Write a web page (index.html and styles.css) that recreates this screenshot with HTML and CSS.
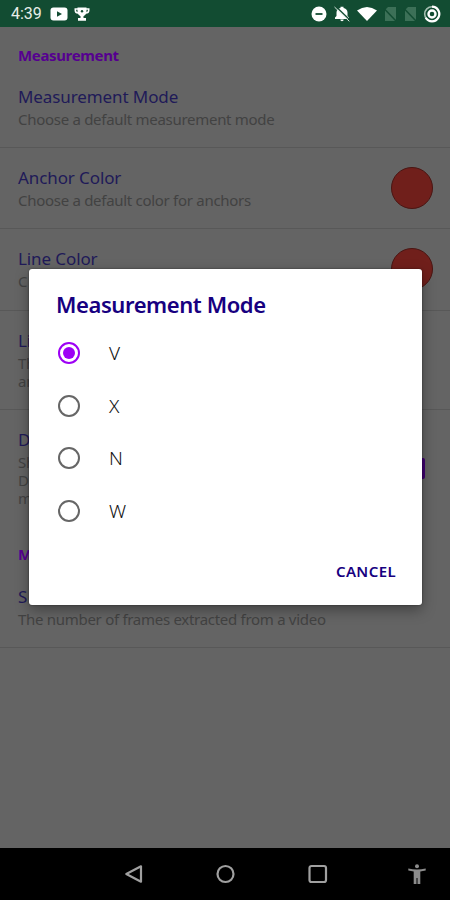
FILE: index.html
```html
<!DOCTYPE html>
<html lang="en">
<head>
  <meta charset="UTF-8">
  <title>Settings</title>
  <meta name="viewport" content="width=device-width, initial-scale=1.0">
  <link rel="stylesheet" href="styles.css">
</head>
<body>
  <div class="screen">
    <header class="status-bar">
      <span class="time">4:39</span>
      <svg class="youtube" width="18" height="14" viewBox="0 0 18 14">
        <rect x="0.5" y="0.5" width="17" height="13" rx="3" fill="#fff"/>
        <path d="M7 4.2v5.6L12 7z" fill="#124c32"/>
      </svg>
      <svg class="trophy" width="16" height="14" viewBox="0 0 16 14">
        <path d="M3.500.5h9v4.300a4.500 4.500 0 0 1-9 0z" fill="#fff"/>
        <path d="M4 2H1.300v1.300C1.300 5 2.500 6 4.300 6M12 2h2.700v1.300C14.700 5 13.500 6 11.700 6" fill="none" stroke="#fff" stroke-width="1.600"/>
        <path d="M6.500 8h3v3h2.500v2.700H4V11h2.500z" fill="#fff"/>
        <circle cx="8" cy="4.300" r="1.200" fill="#124c32"/>
      </svg>
      <div class="status-right">
        <svg width="16" height="16" viewBox="0 0 16 16">
          <circle cx="8" cy="8" r="7.500" fill="#fff"/>
          <path d="M4.500 8h7" stroke="#124c32" stroke-width="1.800"/>
        </svg>
        <svg width="18" height="16" viewBox="0 0 18 16">
          <path d="M2 13v-1.500L3.500 10V6.500C3.500 4 5.300 2.500 7.500 2V.8h3V2c2.200.5 4 2 4 4.500V10l1.500 1.500V13zM7.300 13.500h3.400a1.700 1.700 0 0 1-3.400 0z" fill="#fff"/>
          <path d="M2.600.2l14.600 14" stroke="#124c32" stroke-width="1.300"/>
          <path d="M1.500 1l14.800 14.300" stroke="#dce8e1" stroke-width="1"/>
        </svg>
        <svg width="20" height="16" viewBox="0 0 20 16">
          <path d="M0 4.500Q10-2.500 20 4.500L10 15z" fill="#fff"/>
        </svg>
        <svg width="14" height="16" viewBox="0 0 14 16">
          <path d="M5 1h8v14H2V4z" fill="#3c7057"/>
          <path d="M1 2.500l12 12.500" stroke="#124c32" stroke-width="1.500"/>
        </svg>
        <svg width="14" height="16" viewBox="0 0 14 16">
          <path d="M5 1h8v14H2V4z" fill="#3c7057"/>
          <path d="M1 2.500l12 12.500" stroke="#124c32" stroke-width="1.500"/>
        </svg>
        <svg width="18" height="18" viewBox="0 0 18 18">
          <circle cx="9" cy="9" r="7.300" fill="none" stroke="#a5bfb1" stroke-width="1.600"/>
          <path d="M9 1.700a7.300 7.300 0 1 1-6.300 11" fill="none" stroke="#fff" stroke-width="2.200"/>
          <circle cx="9" cy="9" r="3.500" fill="none" stroke="#fff" stroke-width="2.400"/>
        </svg>
      </div>
    </header>

    <main class="settings">
      <h2 class="section first">Measurement</h2>
      <div class="item">
        <div class="title">Measurement Mode</div>
        <div class="summary">Choose a default measurement mode</div>
      </div>
      <div class="item with-widget">
        <div>
          <div class="title">Anchor Color</div>
          <div class="summary">Choose a default color for anchors</div>
        </div>
        <span class="swatch"></span>
      </div>
      <div class="item with-widget tall">
        <div>
          <div class="title">Line Color</div>
          <div class="summary">C</div>
        </div>
        <span class="swatch"></span>
      </div>
      <div class="item">
        <div class="title">Li</div>
        <div class="summary">Th<br>an</div>
      </div>
      <div class="item with-widget last">
        <div>
          <div class="title">D</div>
          <div class="summary">Sh<br>D<br>m</div>
        </div>
        <span class="checkbox"></span>
      </div>
      <h2 class="section">M</h2>
      <div class="item">
        <div class="title">S</div>
        <div class="summary">The number of frames extracted from a video</div>
      </div>
    </main>

    <nav class="nav-bar">
      <svg width="20" height="20" viewBox="0 0 20 20">
        <path d="M17 2.300v15.400L2.300 10z"/>
      </svg>
      <svg width="20" height="20" viewBox="0 0 20 20">
        <circle cx="9.500" cy="10" r="8"/>
      </svg>
      <svg width="20" height="20" viewBox="0 0 20 20">
        <rect x="1.500" y="2" width="16.500" height="16" rx="2"/>
      </svg>
      <svg class="person" width="18" height="20" viewBox="0 0 18 20">
        <circle cx="9" cy="2.200" r="2"/>
        <path d="M.3 4.500Q9 6.300 17.700 4.500v2L12.300 7.500V20H9.500v-6h-1v6H5.700V7.500L.3 6.500z"/>
      </svg>
    </nav>

    <div class="dialog" role="dialog">
      <h1 class="dialog-title">Measurement Mode</h1>
      <div class="options">
        <label class="option"><span class="radio checked"></span>V</label>
        <label class="option"><span class="radio"></span>X</label>
        <label class="option"><span class="radio"></span>N</label>
        <label class="option"><span class="radio"></span>W</label>
      </div>
      <button class="cancel">CANCEL</button>
    </div>
  </div>
</body>
</html>
```
FILE: styles.css
```css
* {
  box-sizing: border-box;
}
body {
  margin: 0;
  font-family: "Noto Sans", "Open Sans", sans-serif;
}
.screen {
  position: relative;
  display: flex;
  flex-direction: column;
  width: 450px;
  height: 900px;
  overflow: hidden;
  background: #646464;
}
.status-bar {
  display: flex;
  align-items: center;
  height: 27px;
  padding: 0 9px 0 11px;
  background: #124c32;
}
.time {
  width: 39px;
  color: #e8eee9;
  font-family: Roboto, sans-serif;
  font-size: 16px;
}
.trophy {
  margin-left: 6px;
}
.status-right {
  display: flex;
  align-items: center;
  gap: 6px;
  margin-left: auto;
}
.settings {
  flex: 1;
}
.section {
  height: 41px;
  margin: 0;
  padding: 17px 18px 0;
  color: #560090;
  font-size: 15px;
  font-weight: 700;
  letter-spacing: -0.35px;
  line-height: 22px;
}
.section.first {
  height: 40px;
}
.item {
  padding: 19px 18px;
  border-bottom: 1px solid #585858;
}
.tall {
  padding-bottom: 20px;
}
.with-widget {
  display: flex;
  justify-content: space-between;
  align-items: center;
}
.last {
  border-bottom: none;
}
.title {
  margin-bottom: 2px;
  color: #201a58;
  font-size: 17px;
  letter-spacing: -0.1px;
  line-height: 22px;
}
.summary {
  color: #424242;
  font-size: 15px;
  letter-spacing: -0.29px;
  line-height: 18px;
}
.swatch {
  width: 42px;
  height: 42px;
  margin-right: -1px;
  border: 1px solid #4a1512;
  border-radius: 50%;
  background: #701f1b;
}
.checkbox {
  width: 21px;
  height: 21px;
  margin-right: 7px;
  border-radius: 2px;
  background: #3f0070;
}
.nav-bar {
  display: flex;
  align-items: center;
  gap: 72px;
  height: 52px;
  padding-left: 124px;
  background: #000;
}
.nav-bar svg {
  fill: none;
  stroke: #a0a0a0;
  stroke-width: 2.2;
  stroke-linejoin: round;
}
.nav-bar .person {
  margin-left: 8px;
  fill: #8c8c8c;
  stroke: none;
}
.dialog {
  position: absolute;
  top: 269px;
  left: 29px;
  display: flex;
  flex-direction: column;
  width: 393px;
  height: 336px;
  padding: 20px 17px 16px 27px;
  border-radius: 3px;
  background: #fff;
  box-shadow: 0 5px 14px rgba(0, 0, 0, 0.35), 0 0 2px rgba(0, 0, 0, 0.5);
}
.dialog-title {
  margin: 0 0 8px;
  color: #170080;
  font-size: 22px;
  font-weight: 600;
  letter-spacing: -0.42px;
  line-height: 30px;
}
.option {
  display: flex;
  align-items: center;
  height: 52.5px;
  color: #111;
  font-size: 19px;
  font-weight: 300;
}
.radio {
  display: flex;
  justify-content: center;
  align-items: center;
  width: 22px;
  height: 22px;
  margin: 0 29px 0 2px;
  border: 2px solid #666;
  border-radius: 50%;
}
.radio.checked {
  border-color: #9d00f5;
}
.radio.checked::after {
  content: "";
  width: 12px;
  height: 12px;
  border-radius: 50%;
  background: #9d00f5;
}
.cancel {
  align-self: flex-end;
  height: 36px;
  margin-top: auto;
  padding: 0 9px;
  border: none;
  background: none;
  color: #170080;
  font-family: inherit;
  font-size: 15px;
  font-weight: 600;
  letter-spacing: 0.4px;
}
```
